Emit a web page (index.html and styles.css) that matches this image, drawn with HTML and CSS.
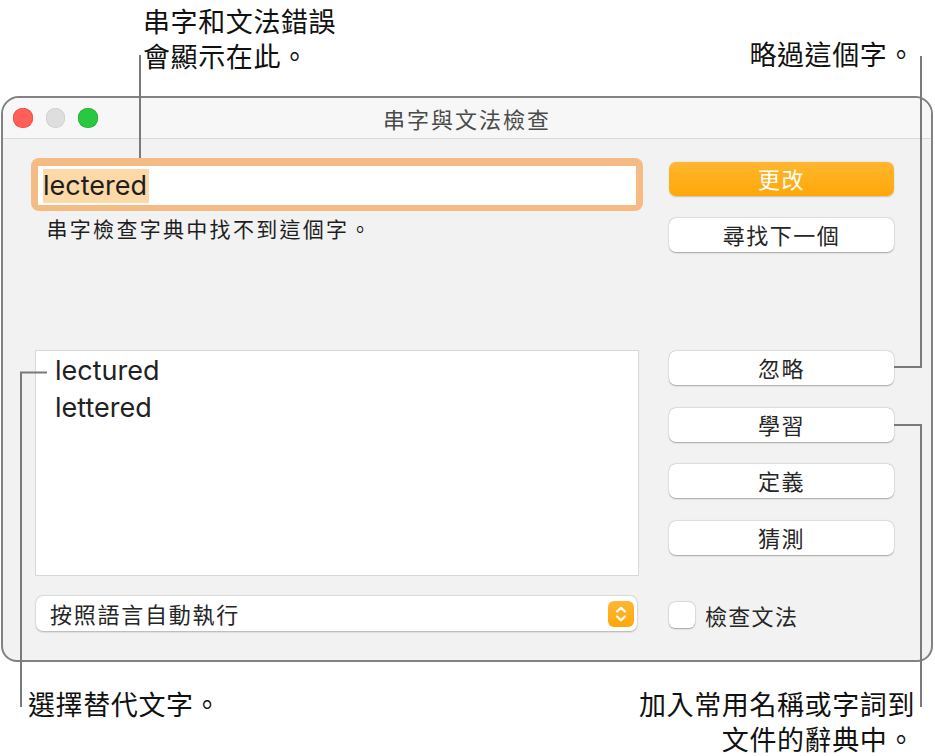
FILE: index.html
```html
<!DOCTYPE html>
<html lang="zh-Hant">
<head>
<meta charset="utf-8">
<title>串字與文法檢查</title>
<link rel="stylesheet" href="styles.css">
</head>
<body>
<div class="page">
  <div class="window">
    <div class="titlebar">
      <div class="lights">
        <span class="light red"></span>
        <span class="light gray"></span>
        <span class="light green"></span>
      </div>
      <div class="title">串字與文法檢查</div>
      <div></div>
    </div>
    <div class="content">
      <div class="left">
        <div class="field-ring">
          <div class="field"><span class="sel">lectered</span></div>
        </div>
        <div class="msg">串字檢查字典中找不到這個字。</div>
        <div class="list">
          <div class="item">lectured</div>
          <div class="item">lettered</div>
        </div>
        <div class="popup">
          <span class="popup-text">按照語言自動執行</span>
          <span class="chev">
            <svg width="26" height="26" viewBox="0 0 26 26"><path d="M9 10.5 L13 6.8 L17 10.5 M9 15.5 L13 19.2 L17 15.5" fill="none" stroke="#fff" stroke-width="2.2" stroke-linecap="round" stroke-linejoin="round"/></svg>
          </span>
        </div>
      </div>
      <div class="right">
        <button class="btn primary first">更改</button>
        <button class="btn">尋找下一個</button>
        <button class="btn far">忽略</button>
        <button class="btn">學習</button>
        <button class="btn">定義</button>
        <button class="btn">猜測</button>
        <label class="check"><span class="box"></span><span class="check-label">檢查文法</span></label>
      </div>
    </div>
  </div>

  <div class="note n1"><div class="ln">串字和文法錯誤</div><div class="ln">會顯示在此。</div></div>
  <div class="note n2"><div class="ln">略過這個字。</div></div>
  <div class="note n3"><div class="ln">選擇替代文字。</div></div>
  <div class="note n4"><div class="ln">加入常用名稱或字詞到</div><div class="ln">文件的辭典中。</div></div>

  <svg class="callouts" width="935" height="756" viewBox="0 0 935 756">
    <g fill="none" stroke="#7a7a7a" stroke-width="2">
      <path d="M140 55 V158"/>
      <path d="M921 56 V367 H894"/>
      <path d="M894 425 H921 V707"/>
      <path d="M21 707 V372.5 H47"/>
    </g>
  </svg>
</div>
</body>
</html>
```

FILE: styles.css
```css
* { box-sizing: border-box; }
html, body { margin: 0; padding: 0; background: #fff; }
body { font-family: Inter, "Noto Sans CJK TC", sans-serif; color: #222; }

.page {
  position: relative;
  width: 935px;
  height: 756px;
  padding-top: 96px;
  padding-left: 1px;
  overflow: hidden;
}

.window {
  width: 932px;
  height: 566px;
  border: 2px solid #828282;
  border-radius: 18px 18px 16px 16px;
  background: #f2f2f2;
  overflow: hidden;
}

.titlebar {
  height: 41px;
  background: #f7f7f7;
  border-bottom: 1px solid #dadada;
  display: grid;
  grid-template-columns: 1fr auto 1fr;
  align-items: center;
}
.lights { display: flex; gap: 13px; padding-left: 10px; }
.light { width: 19.5px; height: 19.5px; border-radius: 50%; display: block; }
.light.red { background: #fe5f57; box-shadow: inset 0 0 0 0.6px #e2463f; }
.light.gray { background: #dedede; box-shadow: inset 0 0 0 0.6px #c9c9c9; }
.light.green { background: #28c840; box-shadow: inset 0 0 0 0.6px #1ea934; }
.title {
  font-family: "Noto Sans CJK TC", sans-serif;
  font-size: 22px;
  letter-spacing: 2px;
  color: #4a4a4a;
  line-height: 30px;
}

.content {
  display: flex;
  gap: 26px;
  padding: 19px 37px 0 28px;
}
.left { width: 612px; display: flex; flex-direction: column; }
.right { width: 225px; display: flex; flex-direction: column; }

.field-ring {
  height: 53px;
  border-radius: 8px;
  background: #f5bb84;
  padding: 8px 7px 6px 7px;
}
.field {
  height: 39px;
  background: #fff;
  display: flex;
  align-items: center;
  padding-left: 5px;
}
.sel {
  font-size: 27px;
  line-height: 34px;
  background: #fdd9a8;
  color: #1e1e1e;
  padding-right: 2px;
}

.msg {
  margin-top: 4px;
  padding-left: 15.5px;
  font-family: "Noto Sans CJK TC", sans-serif;
  font-size: 21px;
  line-height: 26px;
  letter-spacing: 2.3px;
  color: #1e1e1e;
}

.list {
  margin: 109px 0 0 4px;
  width: 604px;
  height: 226px;
  background: #fff;
  border: 1px solid #d8d8d8;
  padding: 1px 0 0 19px;
}
.item {
  font-size: 27px;
  line-height: 37px;
  color: #222;
}

.popup {
  margin: 20px 0 0 5px;
  width: 601px;
  height: 35px;
  background: #fff;
  border-radius: 7px;
  box-shadow: 0 0.5px 2px rgba(0,0,0,0.25), 0 0 0 0.5px rgba(0,0,0,0.06);
  display: flex;
  align-items: center;
  justify-content: space-between;
  padding: 0 3px 0 14px;
}
.popup-text {
  font-family: "Noto Sans CJK TC", sans-serif;
  font-size: 22px;
  letter-spacing: 1.75px;
  color: #262626;
  line-height: 28px;
  margin-top: -2px;
}
.chev {
  width: 26px;
  height: 26px;
  border-radius: 6px;
  background: linear-gradient(#ffb733, #ffa70b);
  display: flex;
}

.btn {
  display: flex;
  align-items: center;
  justify-content: center;
  width: 225px;
  height: 34px;
  margin-top: 22.5px;
  border: none;
  border-radius: 7px;
  background: #fff;
  box-shadow: 0 0.5px 1.5px rgba(0,0,0,0.3), 0 0 0 0.5px rgba(0,0,0,0.06);
  font-family: "Noto Sans CJK TC", sans-serif;
  font-size: 22px;
  letter-spacing: 1.5px;
  color: #262626;
  padding: 0 0 2px 0;
}
.btn.first { margin-top: 3.5px; }
.btn.far { margin-top: 99px; }
.btn.primary {
  background: linear-gradient(#ffb62e, #ffa709);
  color: #fff;
  box-shadow: 0 0.5px 1.5px rgba(0,0,0,0.2);
}

.check {
  margin-top: 46px;
  display: flex;
  align-items: center;
  gap: 10px;
}
.box {
  width: 26px;
  height: 26px;
  border-radius: 6px;
  background: #fff;
  box-shadow: 0 0.5px 1.5px rgba(0,0,0,0.3), 0 0 0 0.5px rgba(0,0,0,0.08);
}
.check-label {
  font-family: "Noto Sans CJK TC", sans-serif;
  font-size: 22px;
  letter-spacing: 1.3px;
  color: #262626;
  line-height: 28px;
}

.note {
  position: absolute;
  font-family: "Noto Sans CJK TC", sans-serif;
  font-size: 27px;
  letter-spacing: 0.6px;
  color: #111;
  white-space: nowrap;
}
.ln { height: 35px; line-height: 35px; }
.n1 { left: 143px; top: 3px; }
.n2 { right: 20px; top: 36px; }
.n3 { left: 28px; top: 686px; }
.n4 { right: 20px; top: 686px; text-align: right; }

.callouts { position: absolute; left: 0; top: 0; pointer-events: none; }
```
